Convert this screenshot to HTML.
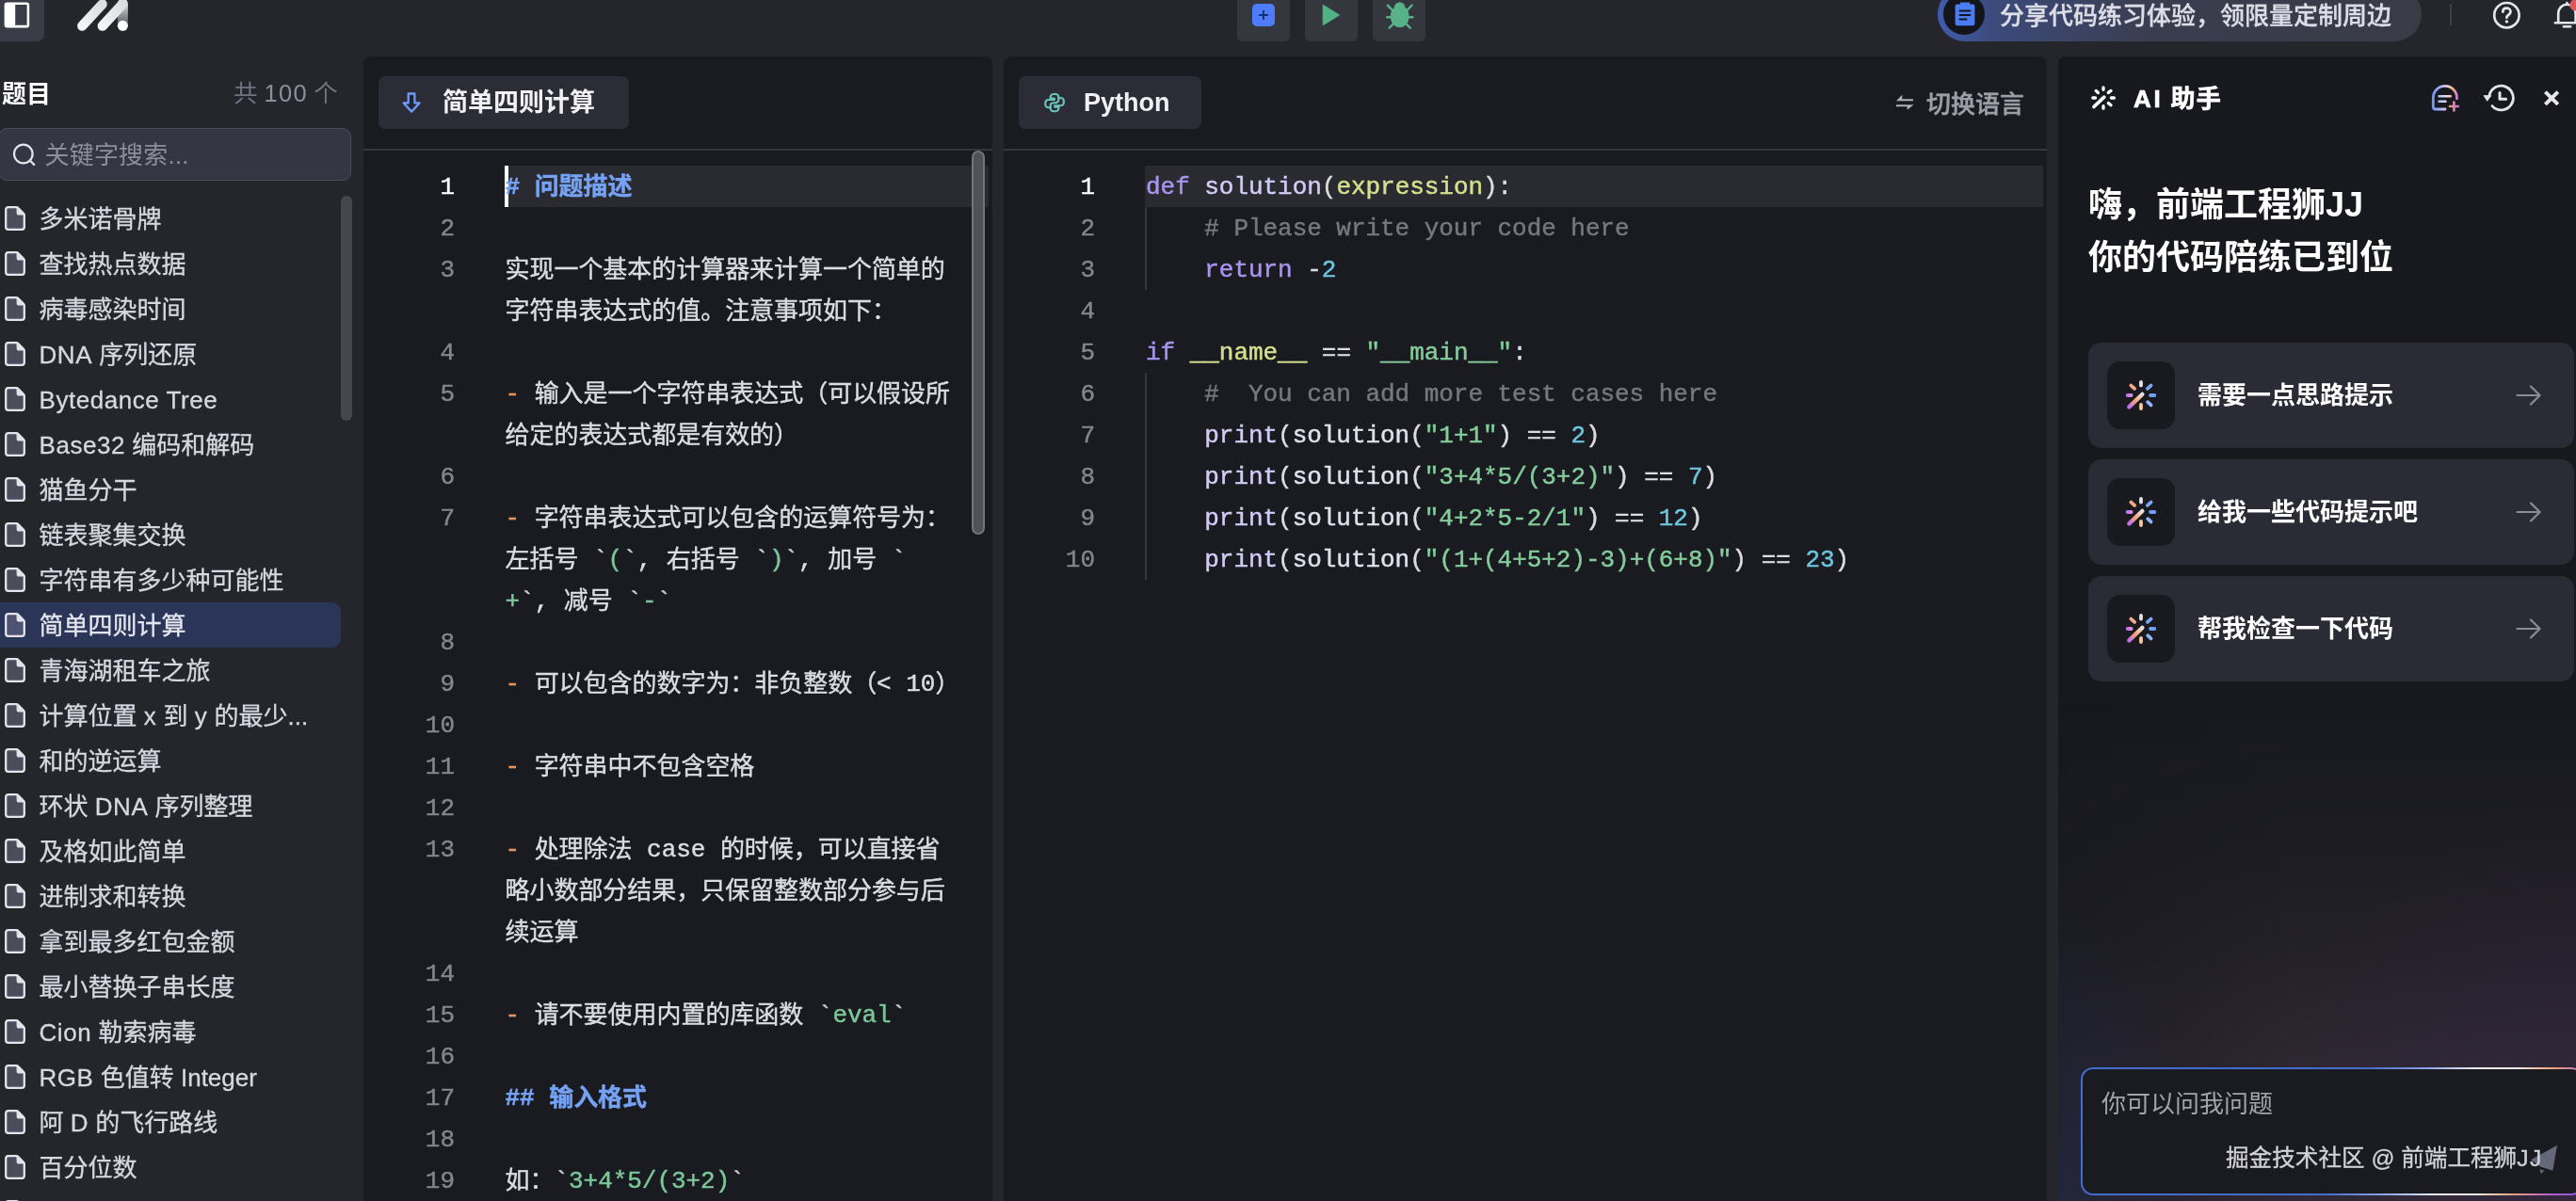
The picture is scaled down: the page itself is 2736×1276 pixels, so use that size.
<!DOCTYPE html>
<html lang="zh-CN">
<head>
<meta charset="utf-8">
<title>简单四则计算</title>
<style>
*{box-sizing:border-box;margin:0;padding:0}
html,body{width:2736px;height:1276px;overflow:hidden;background:#25262c}
body{position:relative;font-family:"Liberation Sans","Noto Sans CJK SC",sans-serif;color:#d6d8e1;font-size:26px}
#root{position:absolute;left:0;top:0;width:2736px;height:1276px;will-change:transform}
.abs{position:absolute}
svg{display:block}
/* top bar */
#tog{left:0;top:0;width:46.5px;height:44px;background:#393b47;border-radius:0 0 7px 0}
.tbtn{top:0;width:56px;height:44px;background:#35373f;border-radius:0 0 6px 6px}
#banner{left:2058px;top:-14px;width:514px;height:58px;border-radius:29px;background:linear-gradient(90deg,#3f5cae 0%,#3c4a7a 12%,#3a3d4e 45%,#393b47 100%)}
#banner .circ{left:6px;top:7px;width:44px;height:44px;border-radius:22px;background:#14151b}
#banner .txt{left:66px;top:14px;height:34px;line-height:34px;font-size:26px;font-weight:500;color:#dcdee7;white-space:nowrap;-webkit-text-stroke:0.3px}
/* sidebar */
#side-title{left:2px;top:80px;font-size:26px;font-weight:700;color:#fff;line-height:40px}
#side-count{left:248px;top:79px;font-size:25.5px;color:#6f7383;line-height:40px;white-space:nowrap}
#search{left:-2px;top:136px;width:375px;height:56px;border:1.5px solid #4a4d5b;border-radius:9px;background:#343743}
#search .ph{left:48.5px;top:9px;line-height:38px;font-size:26px;letter-spacing:0.2px;color:#8c8e9c;white-space:nowrap}
#list{left:0;top:208px;width:386px}
.it{position:absolute;left:0;width:362px;height:48px;line-height:48px;padding-left:41.5px;padding-top:1px;white-space:nowrap;color:#d6d8e1;font-size:26px;-webkit-text-stroke:0.3px}
.it i{font-style:normal;letter-spacing:0.55px}
.it.sel{background:#2b3557;border-radius:0 9px 9px 0;color:#e4e6ee}.it.sel svg path:first-child{fill:#4c5472}
.it svg{position:absolute;left:5px;top:11px}
#sb1{left:362px;top:208px;width:12px;height:239px;border-radius:6px;background:#45474f}
/* panels */
.panel{top:60px;height:1230px;background:#1a1b20;border-radius:8px 8px 0 0}
#p1{left:386px;width:668px}
#p2{left:1066px;width:1108px}
#ai{left:2186px;width:560px;background:#18191f}
.tab{top:21px;height:56px;border-radius:7px;background:#2b2c35;color:#f0f0f5;font-weight:700;font-size:27px;line-height:56px;white-space:nowrap}
.hr{left:0;right:0;top:98px;height:2px;background:#35363e}
.ln{position:absolute;width:60px;text-align:right;color:#85868f;font:26px/44px "Liberation Mono","Noto Sans CJK SC",monospace;-webkit-text-stroke:0.4px;margin-top:0.5px}
.ln.on{color:#fff}
.cl{position:absolute;white-space:pre;font:26px/44px "Liberation Mono","Noto Sans CJK SC",monospace;color:#dcdde2;-webkit-text-stroke:0.45px;margin-top:1px;letter-spacing:-0.04px}
.hl{position:absolute;height:44px;background:#2a2b31}
.z{position:relative;top:0.75px;-webkit-text-stroke:0.4px}
.o{color:#e8935c}.g{color:#7bc79a}.h{color:#76a2f6;font-weight:700}.bt{color:#c9cad0}
.p2{color:#e2e0ee}.k{color:#a993ee}.f{color:#d3cbf6}.p{color:#dcdde2}.v{color:#d4e08c}.c{color:#77787f}.n{color:#6ec6de}.s{color:#84cc9c}
.guide{position:absolute;width:1.5px;background:#37383f}
</style>
</head>
<body>
<div id="root">
<div class="abs" id="tog"><svg class="abs" style="left:4px;top:2px" width="28" height="28" viewBox="0 0 28 28"><rect x="1.9" y="1.7" width="24" height="24.4" rx="1.6" fill="none" stroke="#fff" stroke-width="2.6"/><rect x="1" y="1" width="11.2" height="26" rx="1.5" fill="#fff"/></svg></div>
<svg class="abs" style="left:80px;top:-4px" width="60" height="40" viewBox="80 -4 60 40"><defs><linearGradient id="lg1" x1="0" y1="1" x2="1" y2="0"><stop offset="0" stop-color="#f4f5f6"/><stop offset="1" stop-color="#dcdddf"/></linearGradient><linearGradient id="lg2" gradientUnits="userSpaceOnUse" x1="0" y1="0" x2="0" y2="27"><stop offset="0.15" stop-color="#dcdde0"/><stop offset="0.55" stop-color="#98999e"/><stop offset="1" stop-color="#5e5f65"/></linearGradient></defs><line x1="130.4" y1="4" x2="130.4" y2="27" stroke="url(#lg2)" stroke-width="11" stroke-linecap="round"/><line x1="87.3" y1="27.6" x2="108.6" y2="4.4" stroke="url(#lg1)" stroke-width="10.4" stroke-linecap="round"/><line x1="108.8" y1="27.6" x2="130.2" y2="4.4" stroke="url(#lg1)" stroke-width="10.4" stroke-linecap="round"/><circle cx="130.4" cy="27.3" r="5.5" fill="#fff"/></svg>
<div class="abs tbtn" style="left:1314px"><div class="abs" style="left:16px;top:4px;width:24px;height:24px;border-radius:5px;background:#4f7bfd"></div><svg class="abs" style="left:16px;top:4px" width="24" height="24" viewBox="0 0 24 24"><path d="M12 7.800v8.400M7.800 12h8.400" stroke="#15306e" stroke-width="2" stroke-linecap="round"/></svg></div>
<div class="abs tbtn" style="left:1386px"><svg class="abs" style="left:18px;top:4px" width="20" height="24" viewBox="0 0 20 24"><path d="M1.2 1.2L18.6 12L1.2 22.8Z" fill="#50b183" stroke="#50b183" stroke-width="1" stroke-linejoin="round"/></svg></div>
<div class="abs tbtn" style="left:1458px"><svg class="abs" style="left:12px;top:0" width="34" height="34" viewBox="1470 0 34 34"><g fill="none" stroke="#58b189" stroke-width="2.4" stroke-linecap="round"><path d="M1473.8 5.6L1481 13M1499.6 5.6L1492.4 13M1473.2 18.3H1500.4M1475.6 29.6L1482 23.4M1497.8 29.6L1491.4 23.4"/></g><path d="M1486.7 2.6c3.4 0 5.4 2.2 5.7 5.2c2.7 1.9 4.2 5.4 4.2 9.4c0 6.6-4.2 11.9-9.9 11.9s-9.9-5.3-9.9-11.9c0-4 1.500-7.500 4.200-9.400c0.300-3 2.300-5.200 5.700-5.200z" fill="#58b189"/></svg></div>
<div class="abs" id="banner"><div class="abs circ"></div><svg class="abs" style="left:17px;top:16px" width="24" height="26" viewBox="0 0 24 26"><path d="M3.600 2.600h3.200v-1.200a1 1 0 0 1 1-1h8.400a1 1 0 0 1 1 1v1.200h3.200a2 2 0 0 1 2 2v18.600a2 2 0 0 1-2 2h-16.800a2 2 0 0 1-2-2v-18.600a2 2 0 0 1 2-2z" fill="#4a7df5"/><path d="M6.500 9.400h11M6.500 14h11M6.500 18.600h7" stroke="#14151b" stroke-width="2" stroke-linecap="round"/></svg><div class="abs txt">分享代码练习体验，领限量定制周边</div></div>
<div class="abs" style="left:2602px;top:4px;width:2px;height:23px;background:#3c3e49"></div>
<svg class="abs" style="left:2646px;top:0" width="34" height="34" viewBox="0 0 34 34"><circle cx="16.400" cy="16.200" r="13.200" fill="none" stroke="#e6e7ec" stroke-width="2.700"/><path d="M12.300 12.700c0-2.500 1.800-4 4.100-4s4.100 1.500 4.100 3.800c0 3-4.100 3.300-4.100 6.300" fill="none" stroke="#e6e7ec" stroke-width="2.700" stroke-linecap="round"/><circle cx="16.400" cy="22.900" r="1.700" fill="#e6e7ec"/></svg>
<svg class="abs" style="left:2706px;top:0" width="34" height="34" viewBox="2706 0 34 34"><g fill="none" stroke="#e6e7ec" stroke-width="2.600" stroke-linecap="round" stroke-linejoin="round"><path d="M2713.800 24.200H2740M2717.200 24V14A9.200 9.200 0 0 1 2735.600 14V24M2726.400 3V4.600M2722.800 28.300H2730.200"/></g><circle cx="2735.500" cy="5.300" r="6.200" fill="#e0575b"/></svg>

<div class="abs" id="side-title">题目</div>
<div class="abs" id="side-count">共 <span style="color:#8d8f9d;letter-spacing:1.3px;margin-right:-1px">100</span> 个</div>
<div class="abs" id="search"><svg class="abs" style="left:13px;top:14px" width="28" height="28" viewBox="0 0 28 28"><circle cx="12.800" cy="12.500" r="9.800" fill="none" stroke="#e3e4ea" stroke-width="2.200"/><path d="M20 19.700l4.200 4.200" stroke="#e3e4ea" stroke-width="2.200" stroke-linecap="round"/></svg><div class="abs ph">关键字搜索...</div></div>
<div class="abs" id="list">
<div class="it" style="top:0px"><svg width="22" height="26" viewBox="0 0 22 26"><path d="M3.700 1.200h8.800q1 0 1.800 0.800l5.700 5.700q0.800 0.800 0.800 1.800v12.800a2.500 2.500 0 0 1-2.500 2.500h-14.600a2.500 2.500 0 0 1-2.500-2.500v-18.600a2.500 2.500 0 0 1 2.500-2.500z" fill="#4b4d5a" stroke="#e3e5ec" stroke-width="2.300" stroke-linejoin="round"/><path d="M13.200 1.400l7.400 7.500h-5.400a2 2 0 0 1-2-2z" fill="#e3e5ec" stroke="#e3e5ec" stroke-width="1.2" stroke-linejoin="round"/></svg>多米诺骨牌</div>
<div class="it" style="top:48px"><svg width="22" height="26" viewBox="0 0 22 26"><path d="M3.700 1.200h8.800q1 0 1.800 0.800l5.700 5.700q0.800 0.800 0.800 1.800v12.800a2.500 2.500 0 0 1-2.500 2.500h-14.600a2.500 2.500 0 0 1-2.500-2.500v-18.600a2.500 2.500 0 0 1 2.500-2.500z" fill="#4b4d5a" stroke="#e3e5ec" stroke-width="2.300" stroke-linejoin="round"/><path d="M13.200 1.400l7.400 7.500h-5.400a2 2 0 0 1-2-2z" fill="#e3e5ec" stroke="#e3e5ec" stroke-width="1.2" stroke-linejoin="round"/></svg>查找热点数据</div>
<div class="it" style="top:96px"><svg width="22" height="26" viewBox="0 0 22 26"><path d="M3.700 1.200h8.800q1 0 1.800 0.800l5.700 5.700q0.800 0.800 0.800 1.800v12.800a2.500 2.500 0 0 1-2.500 2.500h-14.600a2.500 2.500 0 0 1-2.500-2.500v-18.600a2.500 2.500 0 0 1 2.500-2.500z" fill="#4b4d5a" stroke="#e3e5ec" stroke-width="2.300" stroke-linejoin="round"/><path d="M13.200 1.400l7.400 7.500h-5.400a2 2 0 0 1-2-2z" fill="#e3e5ec" stroke="#e3e5ec" stroke-width="1.2" stroke-linejoin="round"/></svg>病毒感染时间</div>
<div class="it" style="top:144px"><svg width="22" height="26" viewBox="0 0 22 26"><path d="M3.700 1.200h8.800q1 0 1.800 0.800l5.700 5.700q0.800 0.800 0.800 1.800v12.800a2.500 2.500 0 0 1-2.500 2.500h-14.600a2.500 2.500 0 0 1-2.500-2.500v-18.600a2.500 2.500 0 0 1 2.500-2.500z" fill="#4b4d5a" stroke="#e3e5ec" stroke-width="2.300" stroke-linejoin="round"/><path d="M13.200 1.400l7.400 7.500h-5.400a2 2 0 0 1-2-2z" fill="#e3e5ec" stroke="#e3e5ec" stroke-width="1.2" stroke-linejoin="round"/></svg><i>DNA</i> 序列还原</div>
<div class="it" style="top:192px"><svg width="22" height="26" viewBox="0 0 22 26"><path d="M3.700 1.200h8.800q1 0 1.800 0.800l5.700 5.700q0.800 0.800 0.800 1.800v12.800a2.500 2.500 0 0 1-2.500 2.500h-14.600a2.500 2.500 0 0 1-2.500-2.500v-18.600a2.500 2.500 0 0 1 2.500-2.500z" fill="#4b4d5a" stroke="#e3e5ec" stroke-width="2.300" stroke-linejoin="round"/><path d="M13.200 1.400l7.400 7.500h-5.400a2 2 0 0 1-2-2z" fill="#e3e5ec" stroke="#e3e5ec" stroke-width="1.2" stroke-linejoin="round"/></svg><i>Bytedance Tree</i></div>
<div class="it" style="top:240px"><svg width="22" height="26" viewBox="0 0 22 26"><path d="M3.700 1.200h8.800q1 0 1.800 0.800l5.700 5.700q0.800 0.800 0.800 1.800v12.800a2.500 2.500 0 0 1-2.500 2.500h-14.600a2.500 2.500 0 0 1-2.500-2.500v-18.600a2.500 2.500 0 0 1 2.500-2.500z" fill="#4b4d5a" stroke="#e3e5ec" stroke-width="2.300" stroke-linejoin="round"/><path d="M13.200 1.400l7.400 7.500h-5.400a2 2 0 0 1-2-2z" fill="#e3e5ec" stroke="#e3e5ec" stroke-width="1.2" stroke-linejoin="round"/></svg><i>Base32</i> 编码和解码</div>
<div class="it" style="top:288px"><svg width="22" height="26" viewBox="0 0 22 26"><path d="M3.700 1.200h8.800q1 0 1.800 0.800l5.700 5.700q0.800 0.800 0.800 1.800v12.800a2.500 2.500 0 0 1-2.500 2.500h-14.600a2.500 2.500 0 0 1-2.500-2.500v-18.600a2.500 2.500 0 0 1 2.500-2.500z" fill="#4b4d5a" stroke="#e3e5ec" stroke-width="2.300" stroke-linejoin="round"/><path d="M13.200 1.400l7.400 7.500h-5.400a2 2 0 0 1-2-2z" fill="#e3e5ec" stroke="#e3e5ec" stroke-width="1.2" stroke-linejoin="round"/></svg>猫鱼分干</div>
<div class="it" style="top:336px"><svg width="22" height="26" viewBox="0 0 22 26"><path d="M3.700 1.200h8.800q1 0 1.800 0.800l5.700 5.700q0.800 0.800 0.800 1.800v12.800a2.500 2.500 0 0 1-2.500 2.500h-14.600a2.500 2.500 0 0 1-2.500-2.500v-18.600a2.500 2.500 0 0 1 2.500-2.500z" fill="#4b4d5a" stroke="#e3e5ec" stroke-width="2.300" stroke-linejoin="round"/><path d="M13.200 1.400l7.400 7.500h-5.400a2 2 0 0 1-2-2z" fill="#e3e5ec" stroke="#e3e5ec" stroke-width="1.2" stroke-linejoin="round"/></svg>链表聚集交换</div>
<div class="it" style="top:384px"><svg width="22" height="26" viewBox="0 0 22 26"><path d="M3.700 1.200h8.800q1 0 1.800 0.800l5.700 5.700q0.800 0.800 0.800 1.800v12.800a2.500 2.500 0 0 1-2.500 2.500h-14.600a2.500 2.500 0 0 1-2.500-2.500v-18.600a2.500 2.500 0 0 1 2.500-2.500z" fill="#4b4d5a" stroke="#e3e5ec" stroke-width="2.300" stroke-linejoin="round"/><path d="M13.200 1.400l7.400 7.500h-5.400a2 2 0 0 1-2-2z" fill="#e3e5ec" stroke="#e3e5ec" stroke-width="1.2" stroke-linejoin="round"/></svg>字符串有多少种可能性</div>
<div class="it sel" style="top:432px"><svg width="22" height="26" viewBox="0 0 22 26"><path d="M3.700 1.200h8.800q1 0 1.800 0.800l5.700 5.700q0.800 0.800 0.800 1.800v12.800a2.500 2.500 0 0 1-2.500 2.500h-14.600a2.500 2.500 0 0 1-2.500-2.500v-18.600a2.500 2.500 0 0 1 2.500-2.500z" fill="#4b4d5a" stroke="#e3e5ec" stroke-width="2.300" stroke-linejoin="round"/><path d="M13.200 1.400l7.400 7.500h-5.400a2 2 0 0 1-2-2z" fill="#e3e5ec" stroke="#e3e5ec" stroke-width="1.2" stroke-linejoin="round"/></svg>简单四则计算</div>
<div class="it" style="top:480px"><svg width="22" height="26" viewBox="0 0 22 26"><path d="M3.700 1.200h8.800q1 0 1.800 0.800l5.700 5.700q0.800 0.800 0.800 1.800v12.800a2.500 2.500 0 0 1-2.500 2.500h-14.600a2.500 2.500 0 0 1-2.500-2.500v-18.600a2.500 2.500 0 0 1 2.500-2.500z" fill="#4b4d5a" stroke="#e3e5ec" stroke-width="2.300" stroke-linejoin="round"/><path d="M13.200 1.400l7.400 7.500h-5.400a2 2 0 0 1-2-2z" fill="#e3e5ec" stroke="#e3e5ec" stroke-width="1.2" stroke-linejoin="round"/></svg>青海湖租车之旅</div>
<div class="it" style="top:528px"><svg width="22" height="26" viewBox="0 0 22 26"><path d="M3.700 1.200h8.800q1 0 1.800 0.800l5.700 5.700q0.800 0.800 0.800 1.800v12.800a2.500 2.500 0 0 1-2.500 2.500h-14.600a2.500 2.500 0 0 1-2.500-2.500v-18.600a2.500 2.500 0 0 1 2.500-2.500z" fill="#4b4d5a" stroke="#e3e5ec" stroke-width="2.300" stroke-linejoin="round"/><path d="M13.200 1.400l7.400 7.500h-5.400a2 2 0 0 1-2-2z" fill="#e3e5ec" stroke="#e3e5ec" stroke-width="1.2" stroke-linejoin="round"/></svg>计算位置 <i>x</i> 到 <i>y</i> 的最少...</div>
<div class="it" style="top:576px"><svg width="22" height="26" viewBox="0 0 22 26"><path d="M3.700 1.200h8.800q1 0 1.800 0.800l5.700 5.700q0.800 0.800 0.800 1.800v12.800a2.500 2.500 0 0 1-2.500 2.500h-14.600a2.500 2.500 0 0 1-2.500-2.500v-18.600a2.500 2.500 0 0 1 2.500-2.500z" fill="#4b4d5a" stroke="#e3e5ec" stroke-width="2.300" stroke-linejoin="round"/><path d="M13.200 1.400l7.400 7.500h-5.400a2 2 0 0 1-2-2z" fill="#e3e5ec" stroke="#e3e5ec" stroke-width="1.2" stroke-linejoin="round"/></svg>和的逆运算</div>
<div class="it" style="top:624px"><svg width="22" height="26" viewBox="0 0 22 26"><path d="M3.700 1.200h8.800q1 0 1.800 0.800l5.700 5.700q0.800 0.800 0.800 1.800v12.800a2.500 2.500 0 0 1-2.500 2.500h-14.600a2.500 2.500 0 0 1-2.500-2.500v-18.600a2.500 2.500 0 0 1 2.500-2.500z" fill="#4b4d5a" stroke="#e3e5ec" stroke-width="2.300" stroke-linejoin="round"/><path d="M13.200 1.400l7.400 7.500h-5.400a2 2 0 0 1-2-2z" fill="#e3e5ec" stroke="#e3e5ec" stroke-width="1.2" stroke-linejoin="round"/></svg>环状 <i>DNA</i> 序列整理</div>
<div class="it" style="top:672px"><svg width="22" height="26" viewBox="0 0 22 26"><path d="M3.700 1.200h8.800q1 0 1.800 0.800l5.700 5.700q0.800 0.800 0.800 1.800v12.800a2.500 2.500 0 0 1-2.500 2.500h-14.600a2.500 2.500 0 0 1-2.500-2.500v-18.600a2.500 2.500 0 0 1 2.500-2.500z" fill="#4b4d5a" stroke="#e3e5ec" stroke-width="2.300" stroke-linejoin="round"/><path d="M13.200 1.400l7.400 7.500h-5.400a2 2 0 0 1-2-2z" fill="#e3e5ec" stroke="#e3e5ec" stroke-width="1.2" stroke-linejoin="round"/></svg>及格如此简单</div>
<div class="it" style="top:720px"><svg width="22" height="26" viewBox="0 0 22 26"><path d="M3.700 1.200h8.800q1 0 1.800 0.800l5.700 5.700q0.800 0.800 0.800 1.800v12.800a2.500 2.500 0 0 1-2.500 2.500h-14.600a2.500 2.500 0 0 1-2.500-2.500v-18.600a2.500 2.500 0 0 1 2.500-2.500z" fill="#4b4d5a" stroke="#e3e5ec" stroke-width="2.300" stroke-linejoin="round"/><path d="M13.200 1.400l7.400 7.500h-5.400a2 2 0 0 1-2-2z" fill="#e3e5ec" stroke="#e3e5ec" stroke-width="1.2" stroke-linejoin="round"/></svg>进制求和转换</div>
<div class="it" style="top:768px"><svg width="22" height="26" viewBox="0 0 22 26"><path d="M3.700 1.200h8.800q1 0 1.800 0.800l5.700 5.700q0.800 0.800 0.800 1.800v12.800a2.500 2.500 0 0 1-2.500 2.500h-14.600a2.500 2.500 0 0 1-2.500-2.500v-18.600a2.500 2.500 0 0 1 2.500-2.500z" fill="#4b4d5a" stroke="#e3e5ec" stroke-width="2.300" stroke-linejoin="round"/><path d="M13.200 1.400l7.400 7.500h-5.400a2 2 0 0 1-2-2z" fill="#e3e5ec" stroke="#e3e5ec" stroke-width="1.2" stroke-linejoin="round"/></svg>拿到最多红包金额</div>
<div class="it" style="top:816px"><svg width="22" height="26" viewBox="0 0 22 26"><path d="M3.700 1.200h8.800q1 0 1.800 0.800l5.700 5.700q0.800 0.800 0.800 1.800v12.800a2.500 2.500 0 0 1-2.500 2.500h-14.600a2.500 2.500 0 0 1-2.500-2.500v-18.600a2.500 2.500 0 0 1 2.500-2.500z" fill="#4b4d5a" stroke="#e3e5ec" stroke-width="2.300" stroke-linejoin="round"/><path d="M13.200 1.400l7.400 7.500h-5.400a2 2 0 0 1-2-2z" fill="#e3e5ec" stroke="#e3e5ec" stroke-width="1.2" stroke-linejoin="round"/></svg>最小替换子串长度</div>
<div class="it" style="top:864px"><svg width="22" height="26" viewBox="0 0 22 26"><path d="M3.700 1.200h8.800q1 0 1.800 0.800l5.700 5.700q0.800 0.800 0.800 1.800v12.800a2.500 2.500 0 0 1-2.500 2.500h-14.600a2.500 2.500 0 0 1-2.500-2.500v-18.600a2.500 2.500 0 0 1 2.500-2.500z" fill="#4b4d5a" stroke="#e3e5ec" stroke-width="2.300" stroke-linejoin="round"/><path d="M13.200 1.400l7.400 7.500h-5.400a2 2 0 0 1-2-2z" fill="#e3e5ec" stroke="#e3e5ec" stroke-width="1.2" stroke-linejoin="round"/></svg><i>Cion</i> 勒索病毒</div>
<div class="it" style="top:912px"><svg width="22" height="26" viewBox="0 0 22 26"><path d="M3.700 1.200h8.800q1 0 1.800 0.800l5.700 5.700q0.800 0.800 0.800 1.800v12.800a2.500 2.500 0 0 1-2.500 2.500h-14.600a2.500 2.500 0 0 1-2.500-2.500v-18.600a2.500 2.500 0 0 1 2.500-2.500z" fill="#4b4d5a" stroke="#e3e5ec" stroke-width="2.300" stroke-linejoin="round"/><path d="M13.200 1.400l7.400 7.500h-5.400a2 2 0 0 1-2-2z" fill="#e3e5ec" stroke="#e3e5ec" stroke-width="1.2" stroke-linejoin="round"/></svg><i>RGB</i> 色值转 <i style="letter-spacing:0">Integer</i></div>
<div class="it" style="top:960px"><svg width="22" height="26" viewBox="0 0 22 26"><path d="M3.700 1.200h8.800q1 0 1.800 0.800l5.700 5.700q0.800 0.800 0.800 1.800v12.800a2.500 2.500 0 0 1-2.500 2.500h-14.600a2.500 2.500 0 0 1-2.500-2.500v-18.600a2.500 2.500 0 0 1 2.500-2.500z" fill="#4b4d5a" stroke="#e3e5ec" stroke-width="2.300" stroke-linejoin="round"/><path d="M13.200 1.400l7.400 7.500h-5.400a2 2 0 0 1-2-2z" fill="#e3e5ec" stroke="#e3e5ec" stroke-width="1.2" stroke-linejoin="round"/></svg>阿 <i>D</i> 的飞行路线</div>
<div class="it" style="top:1008px"><svg width="22" height="26" viewBox="0 0 22 26"><path d="M3.700 1.200h8.800q1 0 1.800 0.800l5.700 5.700q0.800 0.800 0.800 1.800v12.800a2.500 2.500 0 0 1-2.500 2.500h-14.600a2.500 2.500 0 0 1-2.500-2.500v-18.600a2.500 2.500 0 0 1 2.500-2.500z" fill="#4b4d5a" stroke="#e3e5ec" stroke-width="2.300" stroke-linejoin="round"/><path d="M13.200 1.400l7.400 7.500h-5.400a2 2 0 0 1-2-2z" fill="#e3e5ec" stroke="#e3e5ec" stroke-width="1.2" stroke-linejoin="round"/></svg>百分位数</div>
<div class="it" style="top:1056px"><svg width="22" height="26" viewBox="0 0 22 26"><path d="M3.700 1.200h8.800q1 0 1.800 0.800l5.700 5.700q0.800 0.800 0.800 1.800v12.800a2.500 2.500 0 0 1-2.500 2.500h-14.600a2.500 2.500 0 0 1-2.500-2.500v-18.600a2.500 2.500 0 0 1 2.500-2.500z" fill="#4b4d5a" stroke="#e3e5ec" stroke-width="2.300" stroke-linejoin="round"/><path d="M13.200 1.400l7.400 7.500h-5.400a2 2 0 0 1-2-2z" fill="#e3e5ec" stroke="#e3e5ec" stroke-width="1.2" stroke-linejoin="round"/></svg><span style="position:relative;top:4px">二进制之和</span></div>
</div>
<div class="abs" id="sb1"></div>

<div class="abs panel" id="p1">
<div class="abs tab" style="left:16px;width:266px;padding-left:68px"><svg class="abs" style="left:23px;top:14px" width="26" height="28" viewBox="0 0 26 28"><path d="M8.700 4.500h6.700v9.900h5.200l-8.500 9.200l-8.500-9.200h5.100z" fill="#20253a" stroke="#6f9af3" stroke-width="2.300" stroke-linejoin="round"/></svg>简单四则计算</div>
<div class="abs hr"></div>
<div class="hl" style="left:150px;top:116px;width:514px"></div>
<div class="abs" style="left:150px;top:116px;width:4px;height:44px;background:#fff"></div>
<div class="ln on" style="left:37px;top:116px">1</div>
<div class="cl" style="left:150.500px;top:116px"><span class="h"># <span class="z">问题描述</span></span></div>
<div class="ln" style="left:37px;top:160px">2</div>
<div class="ln" style="left:37px;top:204px">3</div>
<div class="cl" style="left:150.500px;top:204px"><span class="z">实现一个基本的计算器来计算一个简单的</span></div>
<div class="cl" style="left:150.500px;top:248px"><span class="z">字符串表达式的值。注意事项如下：</span></div>
<div class="ln" style="left:37px;top:292px">4</div>
<div class="ln" style="left:37px;top:336px">5</div>
<div class="cl" style="left:150.500px;top:336px"><span class="o">-</span> <span class="z">输入是一个字符串表达式（可以假设所</span></div>
<div class="cl" style="left:150.500px;top:380px"><span class="z">给定的表达式都是有效的）</span></div>
<div class="ln" style="left:37px;top:424px">6</div>
<div class="ln" style="left:37px;top:468px">7</div>
<div class="cl" style="left:150.500px;top:468px"><span class="o">-</span> <span class="z">字符串表达式可以包含的运算符号为：</span></div>
<div class="cl" style="left:150.500px;top:512px"><span class="z">左括号</span> <span class="bt">`</span><span class="g">(</span><span class="bt">`</span>, <span class="z">右括号</span> <span class="bt">`</span><span class="g">)</span><span class="bt">`</span>, <span class="z">加号</span> <span class="bt">`</span></div>
<div class="cl" style="left:150.500px;top:556px"><span class="g">+</span><span class="bt">`</span>, <span class="z">减号</span> <span class="bt">`</span><span class="g">-</span><span class="bt">`</span></div>
<div class="ln" style="left:37px;top:600px">8</div>
<div class="ln" style="left:37px;top:644px">9</div>
<div class="cl" style="left:150.500px;top:644px"><span class="o">-</span> <span class="z">可以包含的数字为：非负整数（</span>&lt; 10<span class="z">）</span></div>
<div class="ln" style="left:37px;top:688px">10</div>
<div class="ln" style="left:37px;top:732px">11</div>
<div class="cl" style="left:150.500px;top:732px"><span class="o">-</span> <span class="z">字符串中不包含空格</span></div>
<div class="ln" style="left:37px;top:776px">12</div>
<div class="ln" style="left:37px;top:820px">13</div>
<div class="cl" style="left:150.500px;top:820px"><span class="o">-</span> <span class="z">处理除法</span> case <span class="z">的时候，可以直接省</span></div>
<div class="cl" style="left:150.500px;top:864px"><span class="z">略小数部分结果，只保留整数部分参与后</span></div>
<div class="cl" style="left:150.500px;top:908px"><span class="z">续运算</span></div>
<div class="ln" style="left:37px;top:952px">14</div>
<div class="ln" style="left:37px;top:996px">15</div>
<div class="cl" style="left:150.500px;top:996px"><span class="o">-</span> <span class="z">请不要使用内置的库函数</span> <span class="bt">`</span><span class="g">eval</span><span class="bt">`</span></div>
<div class="ln" style="left:37px;top:1040px">16</div>
<div class="ln" style="left:37px;top:1084px">17</div>
<div class="cl" style="left:150.500px;top:1084px"><span class="h">## <span class="z">输入格式</span></span></div>
<div class="ln" style="left:37px;top:1128px">18</div>
<div class="ln" style="left:37px;top:1172px">19</div>
<div class="cl" style="left:150.500px;top:1172px"><span class="z">如：</span><span class="bt">`</span><span class="g">3+4*5/(3+2)</span><span class="bt">`</span></div>
<div class="ln" style="left:37px;top:1216px">20</div>
<div class="abs" style="left:646px;top:100px;width:14px;height:408px;border-radius:7px;background:#505159;border:2px solid #74757b"></div>
</div>

<div class="abs panel" id="p2">
<div class="abs tab" style="left:16px;width:194px;padding-left:69px"><svg class="abs" style="left:25.050px;top:15.950px" width="26.1" height="24.3" viewBox="0 0 24 24" preserveAspectRatio="none"><g fill="none" stroke="#6cc3b6" stroke-width="2" stroke-linecap="round" stroke-linejoin="round"><path d="M12 9h-6a3 3 0 0 0-3 3v2a3 3 0 0 0 3 3h2"/><path d="M12 15h6a3 3 0 0 0 3-3v-2a3 3 0 0 0-3-3h-2"/><path d="M8 9v-3a3 3 0 0 1 3-3h2a3 3 0 0 1 3 3v3a3 3 0 0 1-3 3h-2a3 3 0 0 0-3 3v3a3 3 0 0 0 3 3h2a3 3 0 0 0 3-3v-3"/><path d="M8.200 7.500h3.500M15.800 16.500h-3.500"/></g></svg>Python</div>
<svg class="abs" style="left:940px;top:36px" width="34" height="26" viewBox="940 36 34 26"><path d="M948 47.200L954.300 40.700V45.200H966V47.200ZM948 51.200H966.500L959.700 56.700V53.200H948Z" fill="#b0b1bc"/></svg>
<div class="abs" style="left:980px;top:31px;line-height:40px;font-size:26px;font-weight:500;color:#9c9ea8;white-space:nowrap;-webkit-text-stroke:0.45px">切换语言</div>
<div class="abs hr"></div>
<div class="hl" style="left:150px;top:116px;width:954px"></div>
<div class="guide" style="left:150px;top:160px;height:88px"></div>
<div class="guide" style="left:150px;top:336px;height:220px"></div>
<div class="ln on" style="left:37px;top:116px">1</div>
<div class="cl" style="left:151px;top:116px"><span class="k">def</span> <span class="f">solution</span><span class="p">(</span><span class="v">expression</span><span class="p">):</span></div>
<div class="ln" style="left:37px;top:160px">2</div>
<div class="cl" style="left:151px;top:160px">    <span class="c"># Please write your code here</span></div>
<div class="ln" style="left:37px;top:204px">3</div>
<div class="cl" style="left:151px;top:204px">    <span class="k">return</span> <span class="p">-</span><span class="n">2</span></div>
<div class="ln" style="left:37px;top:248px">4</div>
<div class="ln" style="left:37px;top:292px">5</div>
<div class="cl" style="left:151px;top:292px"><span class="k">if</span> <span class="v">__name__</span> <span class="p">==</span> <span class="s">"__main__"</span><span class="p">:</span></div>
<div class="ln" style="left:37px;top:336px">6</div>
<div class="cl" style="left:151px;top:336px">    <span class="c">#  You can add more test cases here</span></div>
<div class="ln" style="left:37px;top:380px">7</div>
<div class="cl" style="left:151px;top:380px">    <span class="f">print</span><span class="p">(</span><span class="p2">solution</span><span class="p">(</span><span class="s">"1+1"</span><span class="p">) == </span><span class="n">2</span><span class="p">)</span></div>
<div class="ln" style="left:37px;top:424px">8</div>
<div class="cl" style="left:151px;top:424px">    <span class="f">print</span><span class="p">(</span><span class="p2">solution</span><span class="p">(</span><span class="s">"3+4*5/(3+2)"</span><span class="p">) == </span><span class="n">7</span><span class="p">)</span></div>
<div class="ln" style="left:37px;top:468px">9</div>
<div class="cl" style="left:151px;top:468px">    <span class="f">print</span><span class="p">(</span><span class="p2">solution</span><span class="p">(</span><span class="s">"4+2*5-2/1"</span><span class="p">) == </span><span class="n">12</span><span class="p">)</span></div>
<div class="ln" style="left:37px;top:512px">10</div>
<div class="cl" style="left:151px;top:512px">    <span class="f">print</span><span class="p">(</span><span class="p2">solution</span><span class="p">(</span><span class="s">"(1+(4+5+2)-3)+(6+8)"</span><span class="p">) == </span><span class="n">23</span><span class="p">)</span></div>
</div>

<div class="abs panel" id="ai">
<div class="abs" style="left:0;top:680px;width:560px;height:540px;background:linear-gradient(180deg,rgba(67,54,67,0) 0%,rgba(67,54,67,0.12) 30%,rgba(67,54,67,0.28) 50%,rgba(67,54,67,0.5) 72%,rgba(67,54,67,0.56) 100%);-webkit-mask-image:linear-gradient(90deg,rgba(0,0,0,0.35) 0%,#000 45%,#000 100%);mask-image:linear-gradient(90deg,rgba(0,0,0,0.35) 0%,#000 45%,#000 100%)"></div><div class="abs" style="left:160px;top:760px;width:400px;height:460px;background:radial-gradient(ellipse 360px 440px at 100% 100%,rgba(58,38,84,0.34),rgba(58,38,84,0) 100%)"></div><div class="abs" style="left:0;top:880px;width:200px;height:340px;background:radial-gradient(ellipse 150px 320px at 0% 100%,rgba(40,48,88,0.42),rgba(40,48,88,0) 100%)"></div>
<svg class="abs" style="left:32px;top:28px" width="32" height="32" viewBox="2218 88 32 32"><g stroke="#fff" stroke-linecap="round" fill="none"><path d="M2223.900 113.500L2234.800 103.200" stroke-width="3.700"/><path d="M2234 92.900V95.300M2234 112.700V115.200M2222.800 104H2225.500M2242.400 104H2245.400M2226.200 96.400L2228.400 98.500M2242 96.400L2239.300 98.400M2239.300 109.500L2242 111.800" stroke-width="3.300"/></g></svg>
<div class="abs" style="left:80px;top:24.5px;font-size:26px;font-weight:700;color:#fff;line-height:40px;white-space:nowrap;letter-spacing:1.1px;-webkit-text-stroke:0.7px"><span style="letter-spacing:2.6px">AI</span> 助手</div>
<svg class="abs" style="left:394px;top:26px" width="36" height="36" viewBox="2580 86 36 36"><defs><linearGradient id="nc" gradientUnits="userSpaceOnUse" x1="2583" y1="104" x2="2611" y2="104"><stop offset="0" stop-color="#6c96f6"/><stop offset="0.4" stop-color="#b9b6f3"/><stop offset="0.62" stop-color="#f0d2d8"/><stop offset="0.8" stop-color="#f5ae7c"/><stop offset="1" stop-color="#c86ee6"/></linearGradient><linearGradient id="nc2" gradientUnits="userSpaceOnUse" x1="2590" y1="104" x2="2604" y2="104"><stop offset="0" stop-color="#a9c6f9"/><stop offset="0.6" stop-color="#ecd8ee"/><stop offset="1" stop-color="#f6c2aa"/></linearGradient><linearGradient id="nc3" gradientUnits="userSpaceOnUse" x1="2601" y1="113" x2="2612" y2="113"><stop offset="0" stop-color="#f6966c"/><stop offset="0.5" stop-color="#e683b6"/><stop offset="1" stop-color="#b870f2"/></linearGradient></defs><g fill="none" stroke-width="2.800" stroke-linecap="round" stroke-linejoin="round"><path d="M2597 116H2586.800A2.500 2.500 0 0 1 2584.300 113.500V104A12.600 12.600 0 0 1 2609.500 104V104.800" stroke="url(#nc)"/><path d="M2590.600 102.200H2602.800M2590.600 107.700H2597.400" stroke="url(#nc2)" stroke-width="2.600"/><path d="M2606.400 108.600V117.400M2602 113H2610.800" stroke="url(#nc3)" stroke-width="2.600"/></g></svg>
<svg class="abs" style="left:450px;top:26px" width="40" height="36" viewBox="2636 86 40 36"><g fill="none" stroke="#e3e3e8" stroke-linecap="round" stroke-linejoin="round"><path d="M2644.0 101.3A12.800 12.800 0 1 1 2647.0 112.6" stroke-width="2.800"/><path d="M2655 98.500V105.300H2661.600" stroke-width="3"/></g><path d="M2638 101.600H2645.900L2641.700 107.300Z" fill="#e3e3e8" stroke="#e3e3e8" stroke-width="0.8" stroke-linejoin="round"/></svg>
<svg class="abs" style="left:512px;top:32px" width="24" height="24" viewBox="2698 92 24 24"><path d="M2703.400 97.600L2716.800 110.800M2716.800 97.600L2703.400 110.800" stroke="#e8e8ec" stroke-width="4" stroke-linecap="butt" fill="none"/></svg>
<div class="abs" style="left:32px;top:129.5px;font-size:36px;font-weight:700;color:#fff;line-height:56px;white-space:nowrap">嗨，前端工程狮JJ<br>你的代码陪练已到位</div>
<div class="abs" style="left:32px;top:304px;width:516px;height:112px;border-radius:14px;background:#2a2b35">
<div class="abs" style="left:20px;top:20px;width:72px;height:72px;border-radius:14px;background:#191a20"><svg class="abs" style="left:16px;top:16px" width="40" height="40" viewBox="2254 400 40 40"><defs><linearGradient id="sg0" gradientUnits="userSpaceOnUse" x1="2261.400" y1="432.4" x2="2275.300" y2="419"><stop offset="0" stop-color="#c06ef2"/><stop offset="0.45" stop-color="#f5a074"/><stop offset="0.8" stop-color="#f2cdb4"/><stop offset="1" stop-color="#e6e2e4"/></linearGradient><linearGradient id="sl0" gradientUnits="userSpaceOnUse" x1="2259" y1="0" x2="2264" y2="0"><stop offset="0" stop-color="#b873ee"/><stop offset="1" stop-color="#dc92dc"/></linearGradient></defs><g stroke-linecap="round" fill="none" stroke-width="3.800"><path d="M2261.400 432.4L2275.300 419" stroke="url(#sg0)" stroke-width="4.500"/><path d="M2274 406V409.6" stroke="#e6e2e6"/><path d="M2274 430V434" stroke="#f5c8a2"/><path d="M2259.700 420H2263.600" stroke="url(#sl0)"/><path d="M2284 420H2288.300" stroke="#6f9df8"/><path d="M2263.400 409.6L2267.100 412.9" stroke="#f5a885"/><path d="M2284.600 409.6L2280.900 412.9" stroke="#7aa6f8"/><path d="M2281.200 427.2L2284.600 430.4" stroke="#8fb4fa"/></g></svg></div>
<div class="abs" style="left:116px;top:34px;font-size:26px;font-weight:700;color:#fff;line-height:44px;white-space:nowrap">需要一点思路提示</div>
<svg class="abs" style="left:454px;top:44px" width="28" height="24" viewBox="0 0 28 24"><path d="M1.500 12h24M16 2.500l9.600 9.500l-9.600 9.500" fill="none" stroke="#8b8c97" stroke-width="2.200" stroke-linecap="round" stroke-linejoin="round"/></svg>
</div>
<div class="abs" style="left:32px;top:428px;width:516px;height:112px;border-radius:14px;background:#2a2b35">
<div class="abs" style="left:20px;top:20px;width:72px;height:72px;border-radius:14px;background:#191a20"><svg class="abs" style="left:16px;top:16px" width="40" height="40" viewBox="2254 524 40 40"><defs><linearGradient id="sg1" gradientUnits="userSpaceOnUse" x1="2261.400" y1="556.4" x2="2275.300" y2="543"><stop offset="0" stop-color="#c06ef2"/><stop offset="0.45" stop-color="#f5a074"/><stop offset="0.8" stop-color="#f2cdb4"/><stop offset="1" stop-color="#e6e2e4"/></linearGradient><linearGradient id="sl1" gradientUnits="userSpaceOnUse" x1="2259" y1="0" x2="2264" y2="0"><stop offset="0" stop-color="#b873ee"/><stop offset="1" stop-color="#dc92dc"/></linearGradient></defs><g stroke-linecap="round" fill="none" stroke-width="3.800"><path d="M2261.400 556.4L2275.300 543" stroke="url(#sg1)" stroke-width="4.500"/><path d="M2274 530V533.6" stroke="#e6e2e6"/><path d="M2274 554V558" stroke="#f5c8a2"/><path d="M2259.700 544H2263.600" stroke="url(#sl1)"/><path d="M2284 544H2288.300" stroke="#6f9df8"/><path d="M2263.400 533.6L2267.100 536.9" stroke="#f5a885"/><path d="M2284.600 533.6L2280.900 536.9" stroke="#7aa6f8"/><path d="M2281.200 551.2L2284.600 554.4" stroke="#8fb4fa"/></g></svg></div>
<div class="abs" style="left:116px;top:34px;font-size:26px;font-weight:700;color:#fff;line-height:44px;white-space:nowrap">给我一些代码提示吧</div>
<svg class="abs" style="left:454px;top:44px" width="28" height="24" viewBox="0 0 28 24"><path d="M1.500 12h24M16 2.500l9.600 9.500l-9.600 9.500" fill="none" stroke="#8b8c97" stroke-width="2.200" stroke-linecap="round" stroke-linejoin="round"/></svg>
</div>
<div class="abs" style="left:32px;top:552px;width:516px;height:112px;border-radius:14px;background:#2a2b35">
<div class="abs" style="left:20px;top:20px;width:72px;height:72px;border-radius:14px;background:#191a20"><svg class="abs" style="left:16px;top:16px" width="40" height="40" viewBox="2254 648 40 40"><defs><linearGradient id="sg2" gradientUnits="userSpaceOnUse" x1="2261.400" y1="680.4" x2="2275.300" y2="667"><stop offset="0" stop-color="#c06ef2"/><stop offset="0.45" stop-color="#f5a074"/><stop offset="0.8" stop-color="#f2cdb4"/><stop offset="1" stop-color="#e6e2e4"/></linearGradient><linearGradient id="sl2" gradientUnits="userSpaceOnUse" x1="2259" y1="0" x2="2264" y2="0"><stop offset="0" stop-color="#b873ee"/><stop offset="1" stop-color="#dc92dc"/></linearGradient></defs><g stroke-linecap="round" fill="none" stroke-width="3.800"><path d="M2261.400 680.4L2275.300 667" stroke="url(#sg2)" stroke-width="4.500"/><path d="M2274 654V657.6" stroke="#e6e2e6"/><path d="M2274 678V682" stroke="#f5c8a2"/><path d="M2259.700 668H2263.600" stroke="url(#sl2)"/><path d="M2284 668H2288.300" stroke="#6f9df8"/><path d="M2263.400 657.6L2267.100 660.9" stroke="#f5a885"/><path d="M2284.600 657.6L2280.900 660.9" stroke="#7aa6f8"/><path d="M2281.200 675.2L2284.600 678.4" stroke="#8fb4fa"/></g></svg></div>
<div class="abs" style="left:116px;top:34px;font-size:26px;font-weight:700;color:#fff;line-height:44px;white-space:nowrap">帮我检查一下代码</div>
<svg class="abs" style="left:454px;top:44px" width="28" height="24" viewBox="0 0 28 24"><path d="M1.500 12h24M16 2.500l9.600 9.500l-9.600 9.500" fill="none" stroke="#8b8c97" stroke-width="2.200" stroke-linecap="round" stroke-linejoin="round"/></svg>
</div>
<div class="abs" style="left:24px;top:1074px;width:534px;height:136px;border-radius:13px;padding:2.2px;background:linear-gradient(108deg,#446ccc 0%,#456dcd 53%,#8fa8e8 64%,#e6e8f2 72%,#f4ece6 80%,#eaa27a 87%,#b060d0 94%,#8c4ee0 100%)"><div style="width:100%;height:100%;border-radius:11px;background:#1a1b21"></div></div>
<div class="abs" style="left:46px;top:1093px;font-size:26px;color:#a3a4ab;line-height:40px;white-space:nowrap">你可以问我问题</div>
<svg class="abs" style="left:498px;top:1154px" width="36" height="36" viewBox="2684 1214 36 36"><path d="M2716 1216.700L2688 1232.300L2698.700 1239.700L2711.300 1243.700Z" fill="#646879"/><path d="M2697.300 1242L2702.700 1243.700L2698.700 1247.300Z" fill="#5c6071"/></svg>
<div class="abs" style="left:178px;top:1151px;font-size:24.600px;color:#d2d2d7;line-height:40px;white-space:nowrap;-webkit-text-stroke:0.3px">掘金技术社区 @ 前端工程狮<span style="letter-spacing:1.6px">JJ</span></div>
</div>

</div>
</body>
</html>
